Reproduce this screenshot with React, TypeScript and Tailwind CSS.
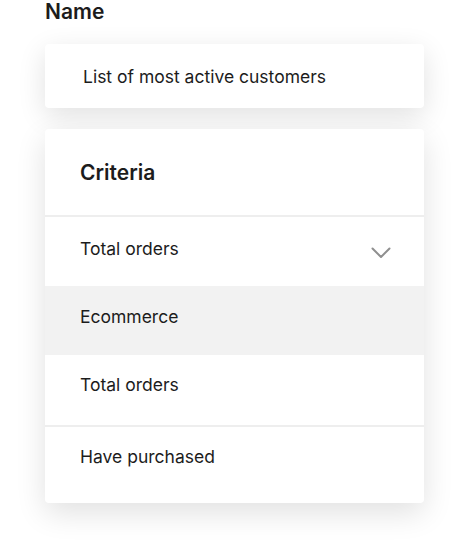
const rows = [
  { label: "Ecommerce", cls: "h-[69px] pb-[6px] bg-[#f2f2f2]" },
  { label: "Total orders", cls: "h-[72px] pb-[9px] border-b-2 border-[#eeeeee]" },
  { label: "Have purchased", cls: "h-[76px] pb-[15px]" },
];

function Chevron() {
  return (
    <svg width="20" height="12" viewBox="0 0 20 12" fill="none" className="mt-[6px]">
      <polyline points="1.5,1.5 10,10 18.5,1.5" stroke="#8f8f8f" strokeWidth="2" strokeLinecap="round" strokeLinejoin="round" />
    </svg>
  );
}

export default function App() {
  return (
    <div
      className="min-h-[556px] w-[468px] bg-white text-[#1c1c1c]"
      style={{ fontFamily: "Inter, 'Noto Sans', sans-serif" }}
    >
      <div className="pl-[45px] pr-[44px]">
        <h2 className="text-[21px] font-semibold leading-[24px]">Name</h2>

        <div className="mt-[20px] flex h-[64px] items-center rounded-[4px] bg-white pl-[38px] pt-[3px] text-[17.5px] shadow-[0_8px_28px_rgba(0,0,0,0.12)]">
          List of most active customers
        </div>

        <div className="mt-[21px] overflow-hidden rounded-[4px] bg-white shadow-[0_10px_30px_rgba(0,0,0,0.12)]">
          <div className="flex h-[88px] items-center border-b-2 border-[#eeeeee] pl-[35px] pt-[2px] text-[21px] font-semibold">
            Criteria
          </div>
          <div className="flex h-[69px] items-center justify-between pb-[4px] pl-[35px] pr-[33px] text-[17.5px]">
            <span>Total orders</span>
            <Chevron />
          </div>
          {rows.map((r) => (
            <div key={r.label} className={`flex items-center pl-[35px] text-[17.5px] ${r.cls}`}>
              {r.label}
            </div>
          ))}
        </div>
      </div>
    </div>
  );
}
